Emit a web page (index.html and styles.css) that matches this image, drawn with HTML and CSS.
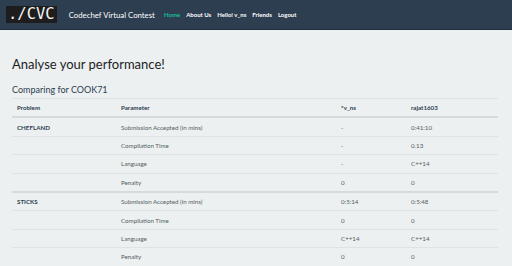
FILE: index.html
```html
<!DOCTYPE html>
<html lang="en">
<head>
    <meta charset="UTF-8">
    <meta name="viewport" content="width=device-width, initial-scale=1.0">
    <title>Codechef Virtual Contest</title>
    <link rel="stylesheet" href="styles.css">
</head>
<body>

    <!-- Top navigation -->
    <nav class="navbar">
        <span class="logo">./CVC</span>
        <span class="brand">Codechef Virtual Contest</span>
        <ul class="nav-links">
            <li class="active">Home</li>
            <li>About Us</li>
            <li>Hello! v_ns</li>
            <li>Friends</li>
            <li>Logout</li>
        </ul>
    </nav>

    <div class="container">
        <h1>Analyse your performance!</h1>
        <h3>Comparing for COOK71</h3>

        <table class="compare">
            <thead>
                <tr>
                    <th class="col-problem">Problem</th>
                    <th class="col-param">Parameter</th>
                    <th class="col-user">*v_ns</th>
                    <th>rajat1603</th>
                </tr>
            </thead>
            <tbody>
                <tr class="group-start">
                    <td class="problem">CHEFLAND</td>
                    <td>Submission Accepted (in mins)</td>
                    <td>-</td>
                    <td>0:41:10</td>
                </tr>
                <tr>
                    <td></td>
                    <td>Compilation Time</td>
                    <td>-</td>
                    <td>0.13</td>
                </tr>
                <tr>
                    <td></td>
                    <td>Language</td>
                    <td>-</td>
                    <td>C++14</td>
                </tr>
                <tr>
                    <td></td>
                    <td>Penalty</td>
                    <td>0</td>
                    <td>0</td>
                </tr>
                <tr class="group-start">
                    <td class="problem">STICKS</td>
                    <td>Submission Accepted (in mins)</td>
                    <td>0:5:14</td>
                    <td>0:5:48</td>
                </tr>
                <tr>
                    <td></td>
                    <td>Compilation Time</td>
                    <td>0</td>
                    <td>0</td>
                </tr>
                <tr>
                    <td></td>
                    <td>Language</td>
                    <td>C++14</td>
                    <td>C++14</td>
                </tr>
                <tr>
                    <td></td>
                    <td>Penalty</td>
                    <td>0</td>
                    <td>0</td>
                </tr>
            </tbody>
        </table>
    </div>

</body>
</html>
```

FILE: styles.css
```css
body {
    margin: 0;
    background-color: #ecf0f1;
    font-family: Lato, "Open Sans", sans-serif;
    color: #2c3e50;
    overflow: hidden;
}

/* Navbar styles */
.navbar {
    display: flex;
    align-items: center;
    height: 29px;
    padding: 0 6px;
    background-color: #2c3e50;
    border-bottom: 1px solid #1f2f3e;
}
.logo {
    display: inline-block;
    height: 17px;
    line-height: 17px;
    padding: 0 2px;
    margin-top: -1px;
    background-color: #1d1d1d;
    color: #f2f2f2;
    font-family: "DejaVu Sans Mono", monospace;
    font-size: 15.5px;
}
.brand {
    margin-left: 12px;
    color: #ffffff;
    font-size: 7.8px;
}
.nav-links {
    display: flex;
    gap: 6px;
    list-style: none;
    margin: 0 0 0 9px;
    padding: 0;
}
.nav-links li {
    color: #ffffff;
    font-size: 6px;
    font-weight: bold;
}
.nav-links li.active {
    color: #18bc9c;
}

/* Page content */
.container {
    padding: 0 14px 0 12px;
}
h1 {
    margin: 26px 0 0;
    font-size: 13px;
    font-weight: normal;
    color: #1d1d1d;
}
h3 {
    margin: 12px 0 0;
    font-size: 9px;
    font-weight: normal;
    color: #2c3e50;
}

/* Comparison table */
.compare {
    width: 100%;
    margin-top: 3px;
    border-collapse: collapse;
    font-size: 6.2px;
    color: #555d63;
}
.compare th,
.compare td {
    height: 17.4px;
    padding: 0 5px;
    text-align: left;
    border-top: 1px solid #dde3e6;
}
.compare th {
    font-weight: bold;
    color: #2c3e50;
    border-bottom: 1px solid #d4dadd;
}
.compare .col-problem { width: 94px; }
.compare .col-param { width: 210px; }
.compare .col-user { width: 60px; }
.compare .problem {
    font-weight: bold;
    color: #2c3e50;
}
.compare tr.group-start td {
    border-top: 2px solid #d4dadd;
}
```
